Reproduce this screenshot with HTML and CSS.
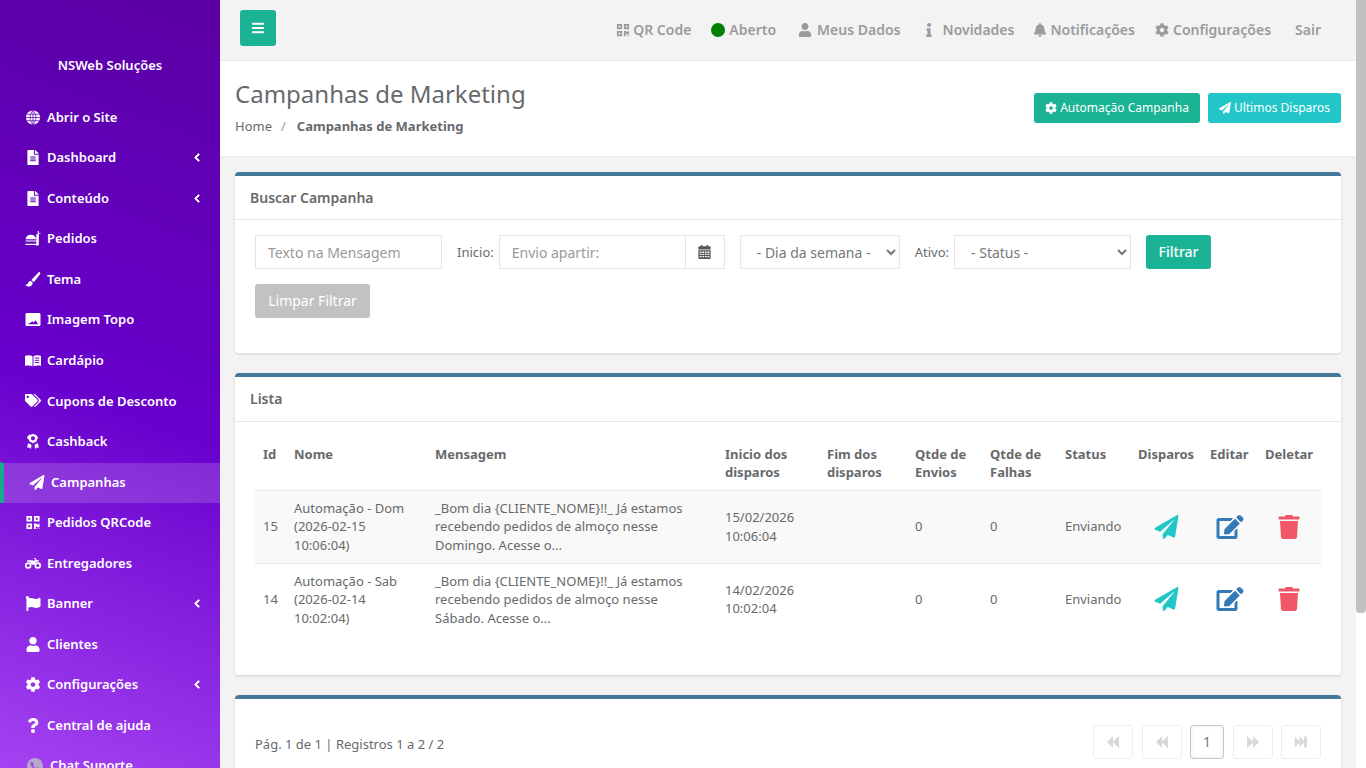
FILE: index.html
```html
<!DOCTYPE html>
<html lang="pt-BR">
<head>
<meta charset="utf-8">
<title>Campanhas de Marketing</title>
<link rel="stylesheet" href="styles.css">
</head>
<body>
<svg class="sprite" xmlns="http://www.w3.org/2000/svg">
  <symbol id="i-plane" viewBox="0 0 512 512"><path d="M476 3.2L12.5 270.6c-18.1 10.4-15.8 35.6 2.2 43.2L121 358.4l287.3-253.2c5.5-4.9 13.3 2.6 8.6 8.3L176 407v80.5c0 23.6 28.5 32.9 42.5 15.8L282 426l124.6 52.2c14.2 6 30.4-2.9 33-18.2l72-432C515 7.8 493.3-6.8 476 3.2z"/></symbol>
  <symbol id="i-edit" viewBox="0 0 576 512"><path d="M402.6 83.2l90.2 90.2c3.8 3.8 3.8 10 0 13.8L274.4 405.6l-92.8 10.3c-12.4 1.4-22.9-9.1-21.5-21.5l10.3-92.8L388.8 83.2c3.8-3.8 10-3.8 13.8 0zm162-22.9l-48.8-48.8c-15.2-15.2-39.9-15.2-55.2 0l-35.4 35.4c-3.8 3.8-3.8 10 0 13.8l90.2 90.2c3.8 3.8 10 3.8 13.8 0l35.4-35.4c15.2-15.3 15.2-40 0-55.2zM384 346.2V448H64V128h229.8c3.2 0 6.2-1.3 8.5-3.5l40-40c7.6-7.6 2.2-20.5-8.5-20.5H48C21.5 64 0 85.5 0 112v352c0 26.5 21.5 48 48 48h352c26.5 0 48-21.5 48-48V306.2c0-10.7-12.9-16-20.5-8.5l-40 40c-2.2 2.3-3.5 5.3-3.5 8.5z"/></symbol>
  <symbol id="i-trash" viewBox="0 0 448 512"><path d="M432 32H312l-9.4-18.7A24 24 0 0 0 281.1 0H166.8a23.72 23.72 0 0 0-21.4 13.3L136 32H16A16 16 0 0 0 0 48v32a16 16 0 0 0 16 16h416a16 16 0 0 0 16-16V48a16 16 0 0 0-16-16zM53.2 467a48 48 0 0 0 47.9 45h245.8a48 48 0 0 0 47.9-45L416 128H32z"/></symbol>
  <symbol id="i-cog" viewBox="0 0 512 512"><path d="M487.4 315.7l-42.6-24.6c4.3-23.2 4.3-47 0-70.2l42.6-24.6c4.9-2.8 7.1-8.6 5.5-14-11.1-35.6-30-67.8-54.7-94.6-3.8-4.1-10-5.1-14.8-2.3L380.8 110c-17.9-15.4-38.5-27.3-60.8-35.1V25.8c0-5.6-3.9-10.5-9.4-11.7-36.7-8.2-74.3-7.8-109.2 0-5.5 1.2-9.4 6.1-9.4 11.7V75c-22.2 7.9-42.8 19.8-60.8 35.1L88.7 85.5c-4.9-2.8-11-1.9-14.8 2.3-24.7 26.7-43.6 58.9-54.7 94.6-1.7 5.4.6 11.2 5.5 14L67.3 221c-4.3 23.2-4.3 47 0 70.2l-42.6 24.6c-4.9 2.8-7.1 8.6-5.5 14 11.1 35.6 30 67.8 54.7 94.6 3.8 4.1 10 5.1 14.8 2.3l42.6-24.6c17.9 15.4 38.5 27.3 60.8 35.1v49.2c0 5.6 3.9 10.5 9.4 11.7 36.7 8.2 74.3 7.8 109.2 0 5.5-1.2 9.4-6.1 9.4-11.7v-49.2c22.2-7.9 42.8-19.8 60.8-35.1l42.6 24.6c4.9 2.8 11 1.9 14.8-2.3 24.7-26.7 43.6-58.9 54.7-94.6 1.5-5.5-.7-11.3-5.6-14.1zM256 336c-44.1 0-80-35.9-80-80s35.9-80 80-80 80 35.9 80 80-35.9 80-80 80z"/></symbol>
  <symbol id="i-user" viewBox="0 0 448 512"><path d="M224 256c70.7 0 128-57.3 128-128S294.7 0 224 0 96 57.3 96 128s57.3 128 128 128zm89.6 32h-16.7c-22.2 10.2-46.9 16-72.9 16s-50.6-5.8-72.9-16h-16.7C60.2 288 0 348.2 0 422.4V464c0 26.5 21.5 48 48 48h352c26.5 0 48-21.5 48-48v-41.6c0-74.2-60.2-134.4-134.4-134.4z"/></symbol>
  <symbol id="i-bell" viewBox="0 0 448 512"><path d="M224 512c35.32 0 63.97-28.65 63.97-64H160.03c0 35.35 28.65 64 63.97 64zm215.39-149.71c-19.32-20.76-55.47-51.99-55.47-154.29 0-77.7-54.48-139.9-127.94-155.16V32c0-17.67-14.32-32-31.98-32s-31.98 14.33-31.98 32v20.84C118.56 68.1 64.08 130.3 64.08 208c0 102.3-36.15 133.53-55.47 154.29-6 6.45-8.66 14.16-8.61 21.71.11 16.4 12.98 32 32.1 32h383.8c19.12 0 32-15.6 32.1-32 .05-7.55-2.61-15.27-8.61-21.71z"/></symbol>
  <symbol id="i-bars" viewBox="0 0 448 512"><path d="M16 132h416c8.837 0 16-7.163 16-16V76c0-8.837-7.163-16-16-16H16C7.163 60 0 67.163 0 76v40c0 8.837 7.163 16 16 16zm0 160h416c8.837 0 16-7.163 16-16v-40c0-8.837-7.163-16-16-16H16c-8.837 0-16 7.163-16 16v40c0 8.837 7.163 16 16 16zm0 160h416c8.837 0 16-7.163 16-16v-40c0-8.837-7.163-16-16-16H16c-8.837 0-16 7.163-16 16v40c0 8.837 7.163 16 16 16z"/></symbol>
  <symbol id="i-file" viewBox="0 0 384 512"><path d="M224 136V0H24C10.7 0 0 10.7 0 24v464c0 13.3 10.7 24 24 24h336c13.3 0 24-10.7 24-24V160H248c-13.2 0-24-10.8-24-24zm64 236c0 6.6-5.4 12-12 12H108c-6.6 0-12-5.4-12-12v-8c0-6.6 5.4-12 12-12h168c6.6 0 12 5.4 12 12v8zm0-64c0 6.6-5.4 12-12 12H108c-6.6 0-12-5.4-12-12v-8c0-6.6 5.4-12 12-12h168c6.6 0 12 5.4 12 12v8zm0-72v8c0 6.6-5.4 12-12 12H108c-6.6 0-12-5.4-12-12v-8c0-6.6 5.4-12 12-12h168c6.6 0 12 5.4 12 12zm96-114.1v6.1H256V0h6.1c6.4 0 12.5 2.5 17 7l97.9 98c4.5 4.5 7 10.6 7 16.9z"/></symbol>
  <symbol id="i-qr" viewBox="0 0 448 512"><path d="M0 224h192V32H0v192zM64 96h64v64H64V96zm192-64v192h192V32H256zm128 128h-64V96h64v64zM0 480h192V288H0v192zm64-128h64v64H64v-64zm352-64h32v128h-96v-32h-32v96h-64V288h96v32h64v-32zm0 160h32v32h-32v-32zm-64 0h32v32h-32v-32z"/></symbol>
  <symbol id="i-left" viewBox="0 0 320 512"><path d="M34.52 239.03L228.87 44.69c9.37-9.37 24.57-9.37 33.94 0l22.67 22.67c9.36 9.36 9.37 24.52.04 33.9L131.49 256l154.02 154.75c9.34 9.38 9.32 24.54-.04 33.9l-22.67 22.67c-9.37 9.37-24.57 9.37-33.94 0L34.52 272.97c-9.37-9.37-9.37-24.57 0-33.94z"/></symbol>
  <symbol id="i-flag" viewBox="0 0 512 512"><path d="M349.565 98.783C295.978 98.783 251.721 64 184.348 64c-24.955 0-47.309 4.384-68.045 12.013a55.947 55.947 0 0 0 3.586-23.562C118.117 24.015 94.806 1.206 66.338.048 34.345-1.254 8 24.296 8 56c0 19.026 9.497 35.825 24 45.945V488c0 13.255 10.745 24 24 24h16c13.255 0 24-10.745 24-24v-94.4c28.311-12.064 63.582-22.122 114.435-22.122 53.588 0 97.844 34.783 165.217 34.783 48.169 0 86.667-16.294 122.505-40.858C506.84 359.452 512 349.571 512 339.045v-243.1c0-23.393-24.269-38.87-45.485-29.016-34.338 15.948-76.454 31.854-116.95 31.854z"/></symbol>
  <symbol id="i-tags" viewBox="0 0 640 512"><path d="M497.941 225.941L286.059 14.059A48 48 0 0 0 252.118 0H48C21.49 0 0 21.49 0 48v204.118a48 48 0 0 0 14.059 33.941l211.882 211.882c18.744 18.745 49.136 18.746 67.882 0l204.118-204.118c18.745-18.745 18.745-49.137 0-67.882zM112 160c-26.51 0-48-21.49-48-48s21.49-48 48-48 48 21.49 48 48-21.49 48-48 48zm513.941 133.823L421.823 497.941c-18.745 18.745-49.137 18.745-67.882 0l-.36-.36L527.64 323.522c16.999-16.999 26.36-39.6 26.36-63.64s-9.362-46.641-26.36-63.64L331.397 0h48.721a48 48 0 0 1 33.941 14.059l211.882 211.882c18.745 18.745 18.745 49.137 0 67.882z"/></symbol>
  <symbol id="i-question" viewBox="0 0 384 512"><path d="M202.021 0C122.202 0 70.503 32.703 29.914 91.026c-7.363 10.58-5.093 25.086 5.178 32.874l43.138 32.709c10.373 7.865 25.132 6.026 33.253-4.148 25.049-31.381 43.63-49.449 82.757-49.449 30.764 0 68.816 19.799 68.816 49.631 0 22.552-18.617 34.134-48.993 51.164-35.423 19.86-82.299 44.576-82.299 106.405V320c0 13.255 10.745 24 24 24h72.471c13.255 0 24-10.745 24-24v-5.773c0-42.86 125.268-44.645 125.268-160.627C377.504 66.256 286.902 0 202.021 0zM192 373.459c-38.196 0-69.271 31.075-69.271 69.271 0 38.195 31.075 69.27 69.271 69.27s69.271-31.075 69.271-69.271-31.075-69.27-69.271-69.27z"/></symbol>
  <symbol id="i-info" viewBox="0 0 192 512"><path d="M20 424.229h20V279.771H20c-11.046 0-20-8.954-20-20V212c0-11.046 8.954-20 20-20h112c11.046 0 20 8.954 20 20v212.229h20c11.046 0 20 8.954 20 20V492c0 11.046-8.954 20-20 20H20c-11.046 0-20-8.954-20-20v-47.771c0-11.046 8.954-20 20-20zM96 0C56.235 0 24 32.235 24 72s32.235 72 72 72 72-32.235 72-72S135.764 0 96 0z"/></symbol>
  <symbol id="i-globe" viewBox="0 0 16 16"><circle cx="8" cy="8" r="7.5"/><path fill="none" stroke="#6200bb" stroke-width=".8" d="M.5 8h15M8 .5v15M1.6 4.600h12.800M1.600 11.400h12.800M8 .5c-4.200 4-4.200 11 0 15M8 .5c4.200 4 4.200 11 0 15"/></symbol>
  <symbol id="i-burger" viewBox="0 0 16 16"><path d="M13 0h1.200v2H16v1h-1.800v11.500c0 .8-.6 1.200-1.200 1.200h-1.500V15H0v-1.300h11.500V3.500h1.500V0zM.2 8.300C.6 5.700 2.900 4 5.700 4c2.900 0 5.200 1.700 5.600 4.300v.4H.2v-.4zM0 10h11.500v1.200H0V10z"/></symbol>
  <symbol id="i-brush" viewBox="0 0 16 16"><path d="M15.400.4c.5.4.6 1 .2 1.600L10 9.600c-.4.5-.9 1-1.400 1.100l-2.300-2c.2-.6.600-1.100 1.100-1.500L13.800.4c.5-.4 1.100-.4 1.600 0zM5.600 9.500l2.100 1.900c0 2.300-1.600 4.100-4.100 4.100C1.600 15.500.200 14.100 0 13.200c.9.300 2 .1 2.500-.7.500-.9.600-3 3.100-3z"/></symbol>
  <symbol id="i-image" viewBox="0 0 16 16"><path fill-rule="evenodd" d="M1.500 1h13c.8 0 1.500.7 1.500 1.500v11c0 .8-.7 1.500-1.500 1.500h-13C.7 15 0 14.300 0 13.500v-11C0 1.700.7 1 1.500 1zM2.500 13h11l-2.800-4.300-2 2.600-1.500-1.500-1.800 1.600-1 .2-1.900 1.400z"/></symbol>
  <symbol id="i-book" viewBox="0 0 20 16"><path fill-rule="evenodd" d="M0 2.500C2.500 1.300 6.500 1.200 9.400 2.600v12.600C6.500 14 2.500 14 0 14.700V2.500zM10.600 2.600C13.500 1.200 17.500 1.300 20 2.500v12.200c-2.500-.7-6.500-.7-9.400.5V2.600zm1.600 2.100v1.100c1.800-.4 3.600-.4 5.600-.1V4.500c-2-.3-3.800-.2-5.600.2zm0 2.800v1.100c1.800-.4 3.600-.4 5.600-.1V7.300c-2-.3-3.800-.2-5.600.2zm0 2.800v1.100c1.800-.4 3.600-.4 5.600-.1v-1.100c-2-.3-3.800-.2-5.600.1z"/></symbol>
  <symbol id="i-award" viewBox="0 0 14 16"><path fill-rule="evenodd" d="M7 0c1 0 1.300.6 2.100.7 1 .1 1.700.4 2.100 1.200.4.800 1 1.200 1 2.100 0 1-.6 1.300-.9 2.200-.3.900-.3 1.700-1.200 2.200-.8.400-1.500.3-2.200.8-.4.300-.6.600-.9.600s-.5-.3-.9-.6c-.7-.5-1.400-.4-2.200-.8-.9-.5-.9-1.300-1.200-2.200C1.400 5.300.8 5 .8 4c0-.9.600-1.300 1-2.100.4-.8 1.100-1.100 2.100-1.200C5.700.6 6 0 7 0zm0 2.400a2.200 2.200 0 1 0 0 4.400 2.200 2.200 0 0 0 0-4.400zM1.700 9.800c.8.500 1.800.4 2.500 1l1.200.9-.2 1.500-.6 2.800-1.500-1.500-2.300.2.900-4.900zM12.300 9.800l.9 4.900-2.300-.2-1.500 1.500-.6-2.800-.2-1.500 1.200-.9c.7-.6 1.700-.5 2.500-1z"/></symbol>
  <symbol id="i-moto" viewBox="0 0 20 14"><path fill-rule="evenodd" d="M4 5.500a4 4 0 1 1 0 8 4 4 0 0 1 0-8zm0 2a2 2 0 1 0 0 4 2 2 0 0 0 0-4zM16 5.500a4 4 0 1 1 0 8 4 4 0 0 1 0-8zm0 2a2 2 0 1 0 0 4 2 2 0 0 0 0-4zM5 3h4.500l1.500 1 1.800-1.600-.6-1.100H11V.5h2.400l1.100 2.200H17v1.800l-2.200.3c-1.500.6-2.500 1.900-2.800 3.700H8.300c-.3-1.800-1.500-3.200-3.300-3.600L2.500 4.500V3H5z"/></symbol>
  <symbol id="i-phone" viewBox="0 0 16 16"><path fill-rule="evenodd" d="M8 0a8 8 0 1 1 0 16A8 8 0 0 1 8 0zM5.300 3.800L4 4.300c-.3.100-.4.300-.4.600.2 3.800 3.700 7.300 7.500 7.500.3 0 .5-.1.600-.4l.5-1.300c.1-.3 0-.5-.2-.6l-1.800-.9c-.2-.1-.4 0-.6.200l-.7.900C7.400 9.700 6.300 8.600 5.700 7.600l.9-.7c.2-.2.300-.4.200-.6l-.9-1.800c-.1-.3-.3-.8-.6-.7z"/></symbol>
  <symbol id="i-cal" viewBox="0 0 14 16"><path fill-rule="evenodd" d="M3 0h1.500v1.500h5V0H11v1.500h1.700c.7 0 1.300.6 1.300 1.300V5H0V2.800c0-.7.600-1.300 1.300-1.300H3V0zM0 6h14v8.700c0 .7-.6 1.300-1.300 1.300H1.300C.6 16 0 15.400 0 14.700V6zm1.500 1.500v1.500h2V7.500h-2zm3 0v1.500h2V7.500h-2zm3 0v1.500h2V7.500h-2zm3 0v1.500h2V7.500h-2zm-9 2.500v1.500h2V10h-2zm3 0v1.500h2V10h-2zm3 0v1.500h2V10h-2zm3 0v1.500h2V10h-2zm-9 2.500V14h2v-1.500h-2zm3 0V14h2v-1.500h-2zm3 0V14h2v-1.500h-2zm3 0V14h2v-1.500h-2z"/></symbol>
  <symbol id="i-first" viewBox="0 0 16 14"><path d="M15 0v14L8 7.700V14L1 7l7-7v6.300L15 0z"/></symbol>
  <symbol id="i-next" viewBox="0 0 16 14"><path d="M1 0v14l7-6.300V14l7-7-7-7v6.300L1 0z"/></symbol>
  <symbol id="i-last" viewBox="0 0 18 14"><path d="M1 0v14l6-6.300V14l6-6.300V14h3.500V0H13v6.300L7 0v6.300L1 0z"/></symbol>
</svg>

<div class="app">
  <aside class="sidebar">
    <div class="brand">NSWeb Soluções</div>
    <nav class="menu">
      <a class="menu-item"><svg class="mi"><use href="#i-globe"/></svg><span class="ml">Abrir o Site</span></a>
      <a class="menu-item"><svg class="mi"><use href="#i-file"/></svg><span class="ml">Dashboard</span><svg class="arrow"><use href="#i-left"/></svg></a>
      <a class="menu-item"><svg class="mi"><use href="#i-file"/></svg><span class="ml">Conteúdo</span><svg class="arrow"><use href="#i-left"/></svg></a>
      <a class="menu-item"><svg class="mi"><use href="#i-burger"/></svg><span class="ml">Pedidos</span></a>
      <a class="menu-item"><svg class="mi"><use href="#i-brush"/></svg><span class="ml">Tema</span></a>
      <a class="menu-item"><svg class="mi"><use href="#i-image"/></svg><span class="ml">Imagem Topo</span></a>
      <a class="menu-item"><svg class="mi"><use href="#i-book"/></svg><span class="ml">Cardápio</span></a>
      <a class="menu-item"><svg class="mi"><use href="#i-tags"/></svg><span class="ml">Cupons de Desconto</span></a>
      <a class="menu-item"><svg class="mi"><use href="#i-award"/></svg><span class="ml">Cashback</span></a>
      <a class="menu-item active"><svg class="mi"><use href="#i-plane"/></svg><span class="ml">Campanhas</span></a>
      <a class="menu-item"><svg class="mi"><use href="#i-qr"/></svg><span class="ml">Pedidos QRCode</span></a>
      <a class="menu-item"><svg class="mi"><use href="#i-moto"/></svg><span class="ml">Entregadores</span></a>
      <a class="menu-item"><svg class="mi"><use href="#i-flag"/></svg><span class="ml">Banner</span><svg class="arrow"><use href="#i-left"/></svg></a>
      <a class="menu-item"><svg class="mi"><use href="#i-user"/></svg><span class="ml">Clientes</span></a>
      <a class="menu-item"><svg class="mi"><use href="#i-cog"/></svg><span class="ml">Configurações</span><svg class="arrow"><use href="#i-left"/></svg></a>
      <a class="menu-item"><svg class="mi"><use href="#i-question"/></svg><span class="ml">Central de ajuda</span></a>
      <a class="menu-item chat"><svg class="mi"><use href="#i-phone"/></svg><span class="ml">Chat Suporte</span></a>
    </nav>
  </aside>

  <main class="main">
    <header class="topbar">
      <button class="burger" type="button" aria-label="Menu"><svg class="bars"><use href="#i-bars"/></svg></button>
      <nav class="toplinks">
        <a class="tl tl-qr"><svg class="ti"><use href="#i-qr"/></svg>QR Code</a>
        <a class="tl tl-open"><span class="dot"></span>Aberto</a>
        <a class="tl tl-user"><svg class="ti"><use href="#i-user"/></svg>Meus Dados</a>
        <a class="tl tl-info"><svg class="ti"><use href="#i-info"/></svg>Novidades</a>
        <a class="tl tl-bell"><svg class="ti"><use href="#i-bell"/></svg>Notificações</a>
        <a class="tl tl-cog"><svg class="ti"><use href="#i-cog"/></svg>Configurações</a>
        <a class="tl tl-exit">Sair</a>
      </nav>
    </header>

    <section class="heading">
      <div>
        <h2 class="title">Campanhas de Marketing</h2>
        <ol class="crumbs">
          <li>Home</li>
          <li class="sep">/</li>
          <li class="current">Campanhas de Marketing</li>
        </ol>
      </div>
      <div class="head-actions">
        <a class="hbtn green"><svg class="hi"><use href="#i-cog"/></svg>Automação Campanha</a>
        <a class="hbtn cyan"><svg class="hi"><use href="#i-plane"/></svg>Ultimos Disparos</a>
      </div>
    </section>

    <div class="content">
      <section class="card">
        <h5 class="card-title">Buscar Campanha</h5>
        <form class="filters">
          <input class="field f-text" type="text" placeholder="Texto na Mensagem">
          <div class="labeled">
            <label class="lbl">Inicio:</label>
            <div class="group">
              <input class="field f-date" type="text" placeholder="Envio apartir:">
              <span class="addon"><svg class="cal"><use href="#i-cal"/></svg></span>
            </div>
          </div>
          <select class="field f-day"><option>- Dia da semana -</option></select>
          <div class="labeled">
            <label class="lbl">Ativo:</label>
            <select class="field f-status"><option>- Status -</option></select>
          </div>
          <button class="btn btn-go" type="button">Filtrar</button>
          <button class="btn btn-clear" type="button">Limpar Filtrar</button>
        </form>
      </section>

      <section class="card">
        <h5 class="card-title title-list">Lista</h5>
        <div class="list-body">
          <table class="grid">
            <thead>
              <tr>
                <th class="c-id">Id</th>
                <th class="c-nome">Nome</th>
                <th class="c-msg">Mensagem</th>
                <th class="c-ini">Inicio dos disparos</th>
                <th class="c-fim">Fim dos disparos</th>
                <th class="c-env">Qtde de Envios</th>
                <th class="c-fal">Qtde de Falhas</th>
                <th class="c-st">Status</th>
                <th class="c-dis">Disparos</th>
                <th class="c-ed">Editar</th>
                <th class="c-del">Deletar</th>
              </tr>
            </thead>
            <tbody>
              <tr class="odd">
                <td>15</td>
                <td>Automação - Dom (2026-02-15 10:06:04)</td>
                <td>_Bom dia {CLIENTE_NOME}!!_ Já estamos recebendo pedidos de almoço nesse Domingo. Acesse o...</td>
                <td>15/02/2026 10:06:04</td>
                <td></td>
                <td>0</td>
                <td>0</td>
                <td>Enviando</td>
                <td class="act"><svg class="a-plane"><use href="#i-plane"/></svg></td>
                <td class="act"><svg class="a-edit"><use href="#i-edit"/></svg></td>
                <td class="act"><svg class="a-trash"><use href="#i-trash"/></svg></td>
              </tr>
              <tr class="last">
                <td>14</td>
                <td>Automação - Sab (2026-02-14 10:02:04)</td>
                <td>_Bom dia {CLIENTE_NOME}!!_ Já estamos recebendo pedidos de almoço nesse Sábado. Acesse o...</td>
                <td>14/02/2026 10:02:04</td>
                <td></td>
                <td>0</td>
                <td>0</td>
                <td>Enviando</td>
                <td class="act"><svg class="a-plane"><use href="#i-plane"/></svg></td>
                <td class="act"><svg class="a-edit"><use href="#i-edit"/></svg></td>
                <td class="act"><svg class="a-trash"><use href="#i-trash"/></svg></td>
              </tr>
            </tbody>
          </table>
        </div>
      </section>

      <section class="card card-pager">
        <span class="pager-info">Pág. 1 de 1 | Registros 1 a 2 / 2</span>
        <div class="pager">
          <span class="pg"><svg class="pi"><use href="#i-first"/></svg></span>
          <span class="pg"><svg class="pi"><use href="#i-first"/></svg></span>
          <span class="pg pg-cur">1</span>
          <span class="pg"><svg class="pi"><use href="#i-next"/></svg></span>
          <span class="pg"><svg class="pi"><use href="#i-last"/></svg></span>
        </div>
      </section>
    </div>
  </main>
</div>
<div class="scrollbar"><div class="scroll-thumb"></div></div>
</body>
</html>
```

FILE: styles.css
```css
* { box-sizing: border-box; }
html::-webkit-scrollbar { display: none; }
body {
  margin: 0;
  font-family: "Noto Sans", "Open Sans", sans-serif;
  font-size: 13px;
  line-height: 18.57px;
  color: #676a6c;
  background: #f3f3f4;
}
.sprite { position: absolute; width: 0; height: 0; overflow: hidden; }
svg { fill: currentColor; display: block; }

.scrollbar {
  position: fixed;
  top: 0;
  right: 0;
  bottom: 0;
  width: 10px;
  background: #fff;
}
.scroll-thumb {
  height: 613px;
  background: #c1c1c1;
  border-radius: 0 0 4px 4px;
}

.app { display: flex; min-height: 962px; align-items: flex-start; }

.sidebar {
  position: sticky;
  top: 0;
  flex: 0 0 220px;
  height: 100vh;
  overflow: hidden;
  color: #fff;
  background: linear-gradient(200deg, #5a00a3 0%, #6800cc 52%, #a443f2 100%);
}
.brand {
  height: 97.25px;
  padding-top: 56px;
  text-align: center;
  font-weight: 600;
}
.menu-item {
  display: flex;
  align-items: center;
  height: 40.55px;
  padding-left: 25px;
  padding-bottom: 1px;
  font-weight: 600;
}
.mi { width: 16px; height: 15px; flex: none; margin-right: 6px; }
.ml { flex: 1; }
.arrow {
  width: 8px;
  height: 9px;
  flex: none;
  margin-right: 19px;
  stroke: currentColor;
  stroke-width: 50px;
}
.menu-item.active {
  height: 41.05px;
  margin-bottom: -.5px;
  padding-left: 25px;
  background: rgba(255, 255, 255, .16);
  background-clip: padding-box;
  border-top: 1px solid transparent;
  border-left: 4px solid #19aa8d;
}
.chat .mi { color: #b4a9c8; margin-left: 2px; margin-right: 7px; height: 16px; }

.main { flex: 1; min-width: 0; }

.topbar {
  display: flex;
  justify-content: space-between;
  height: 61px;
  padding: 10px 45px 0 20px;
  border-bottom: 1px solid #e7eaec;
}
.burger {
  width: 36px;
  height: 36px;
  padding: 0;
  display: flex;
  align-items: center;
  justify-content: center;
  color: #fff;
  background: #1ab394;
  border: 0;
  border-radius: 3px;
}
.bars { width: 12px; height: 14px; }
.toplinks {
  display: flex;
  height: 40px;
  align-items: center;
  color: #999c9e;
  font-size: 14px;
  font-weight: 600;
}
.tl { display: flex; align-items: center; margin-left: 20px; white-space: nowrap; }
.ti { width: 14px; height: 14px; margin-right: 3px; }
.dot { width: 14px; height: 14px; margin-right: 4px; border-radius: 50%; background: #008000; }
.tl-user { margin-left: 22px; }
.tl-user .ti { margin-right: 5px; }
.tl-info { margin-left: 24px; }
.tl-info .ti { width: 8px; margin-right: 10px; }
.tl-bell { margin-left: 19px; }
.tl-cog .ti { margin-right: 4px; }
.tl-exit { margin-left: 24px; }

.heading {
  display: flex;
  justify-content: space-between;
  height: 96px;
  padding: 16px 25px 0 15px;
  background: #fff;
  border-bottom: 1px solid #e7eaec;
}
.title {
  margin: 0;
  font-size: 24px;
  font-weight: 400;
  line-height: 33px;
}
.crumbs {
  display: flex;
  margin: 7px 0 0;
  padding: 0;
  list-style: none;
}
.sep { margin: 0 11px 0 9px; color: #a0a2a4; }
.current { font-weight: 700; }
.head-actions { display: flex; gap: 8px; padding-top: 16px; }
.hbtn {
  display: flex;
  align-items: center;
  height: 30px;
  padding: 0 11px;
  color: #fff;
  font-size: 12px;
  border-radius: 3px;
}
.hi { width: 12px; height: 12px; margin-right: 3px; }
.green { background: #1ab394; }
.cyan { background: #23c6c8; }

.content { padding: 15px 25px 0 15px; }
.card {
  margin-bottom: 20px;
  background: #fff;
  border-top: 4px solid #44789b;
  border-radius: 4px;
  box-shadow: 0 1px 3px rgba(0, 0, 0, .14);
}
.card-title {
  display: flex;
  align-items: center;
  height: 44px;
  margin: 0;
  padding: 2px 15px 0;
  font-size: 14px;
  font-weight: 600;
  border-bottom: 1px solid #e5e6e7;
}
.title-list { height: 45px; padding-top: 0; }
.filters {
  display: flex;
  flex-wrap: wrap;
  gap: 15px;
  padding: 15px 20px 35px;
}
.field {
  height: 34px;
  padding: 0 12px;
  font: inherit;
  font-size: 14px;
  color: #777;
  background: #fff;
  border: 1px solid #e5e6e7;
  outline: 0;
}
.field::placeholder { color: #999; opacity: 1; }
.f-text { width: 187px; }
.f-date { width: 187px; }
.f-day { width: 160px; padding: 0 0 0 12px; }
.f-status { width: 177px; padding: 0 0 0 12px; }
.labeled { display: flex; align-items: center; gap: 5px; }
.lbl { font-size: 13px; }
.group { display: flex; }
.addon {
  display: flex;
  align-items: center;
  justify-content: center;
  width: 40px;
  height: 34px;
  margin-left: -1px;
  color: #555;
  border: 1px solid #e5e6e7;
}
.cal { width: 13px; height: 14px; }
.btn {
  height: 34px;
  padding: 0;
  font: inherit;
  font-size: 14px;
  font-weight: 500;
  line-height: 34px;
  white-space: nowrap;
  color: #fff;
  border: 0;
  border-radius: 3px;
}
.btn-go { width: 65px; background: #1ab394; }
.btn-clear { width: 115px; background: #c2c2c2; font-weight: 400; }

.list-body { padding: 14.7px 20px 40.3px; }
.grid { width: 100%; table-layout: fixed; border-collapse: collapse; }
.grid th {
  padding: 8px;
  text-align: left;
  vertical-align: top;
  font-weight: 700;
  border-bottom: 1px solid #e7e7e7;
}
.grid td { padding: 8px; vertical-align: middle; border-bottom: 1px solid #e7e7e7; }
.grid tr.odd td { background: #f9f9f9; }
.grid tr.last td { border-bottom: 0; }
.c-id { width: 31px; }
.c-nome { width: 141px; }
.c-msg { width: 290px; }
.c-ini { width: 102px; }
.c-fim { width: 88px; }
.c-env { width: 75px; }
.c-fal { width: 75px; }
.c-st { width: 73px; }
.c-dis { width: 72px; }
.c-ed { width: 55px; }
.c-del { width: 64px; }
.grid .act svg { margin: 0 auto; height: 24px; }
.grid td.act { padding-left: 0; padding-right: 0; }
.a-plane { width: 25px; color: #23c6c8; }
.a-edit { width: 28px; color: #337ab7; }
.a-trash { width: 22px; color: #f25767; }

.card-pager {
  display: flex;
  justify-content: space-between;
  height: 100px;
  padding: 26px 20px 0;
}
.pager-info { padding-top: 10px; }
.pager { display: flex; gap: 8.5px; }
.pg {
  display: flex;
  align-items: center;
  justify-content: center;
  width: 40px;
  height: 34px;
  color: #d8d8d8;
  border: 1px solid #eee;
  border-radius: 3px;
}
.pg-cur {
  width: 34px;
  color: #777;
  font-size: 14px;
  border-color: #c8c8c8;
  box-shadow: inset 0 0 5px rgba(0, 0, 0, .08);
}
.pi { width: 14px; height: 12px; }
```
